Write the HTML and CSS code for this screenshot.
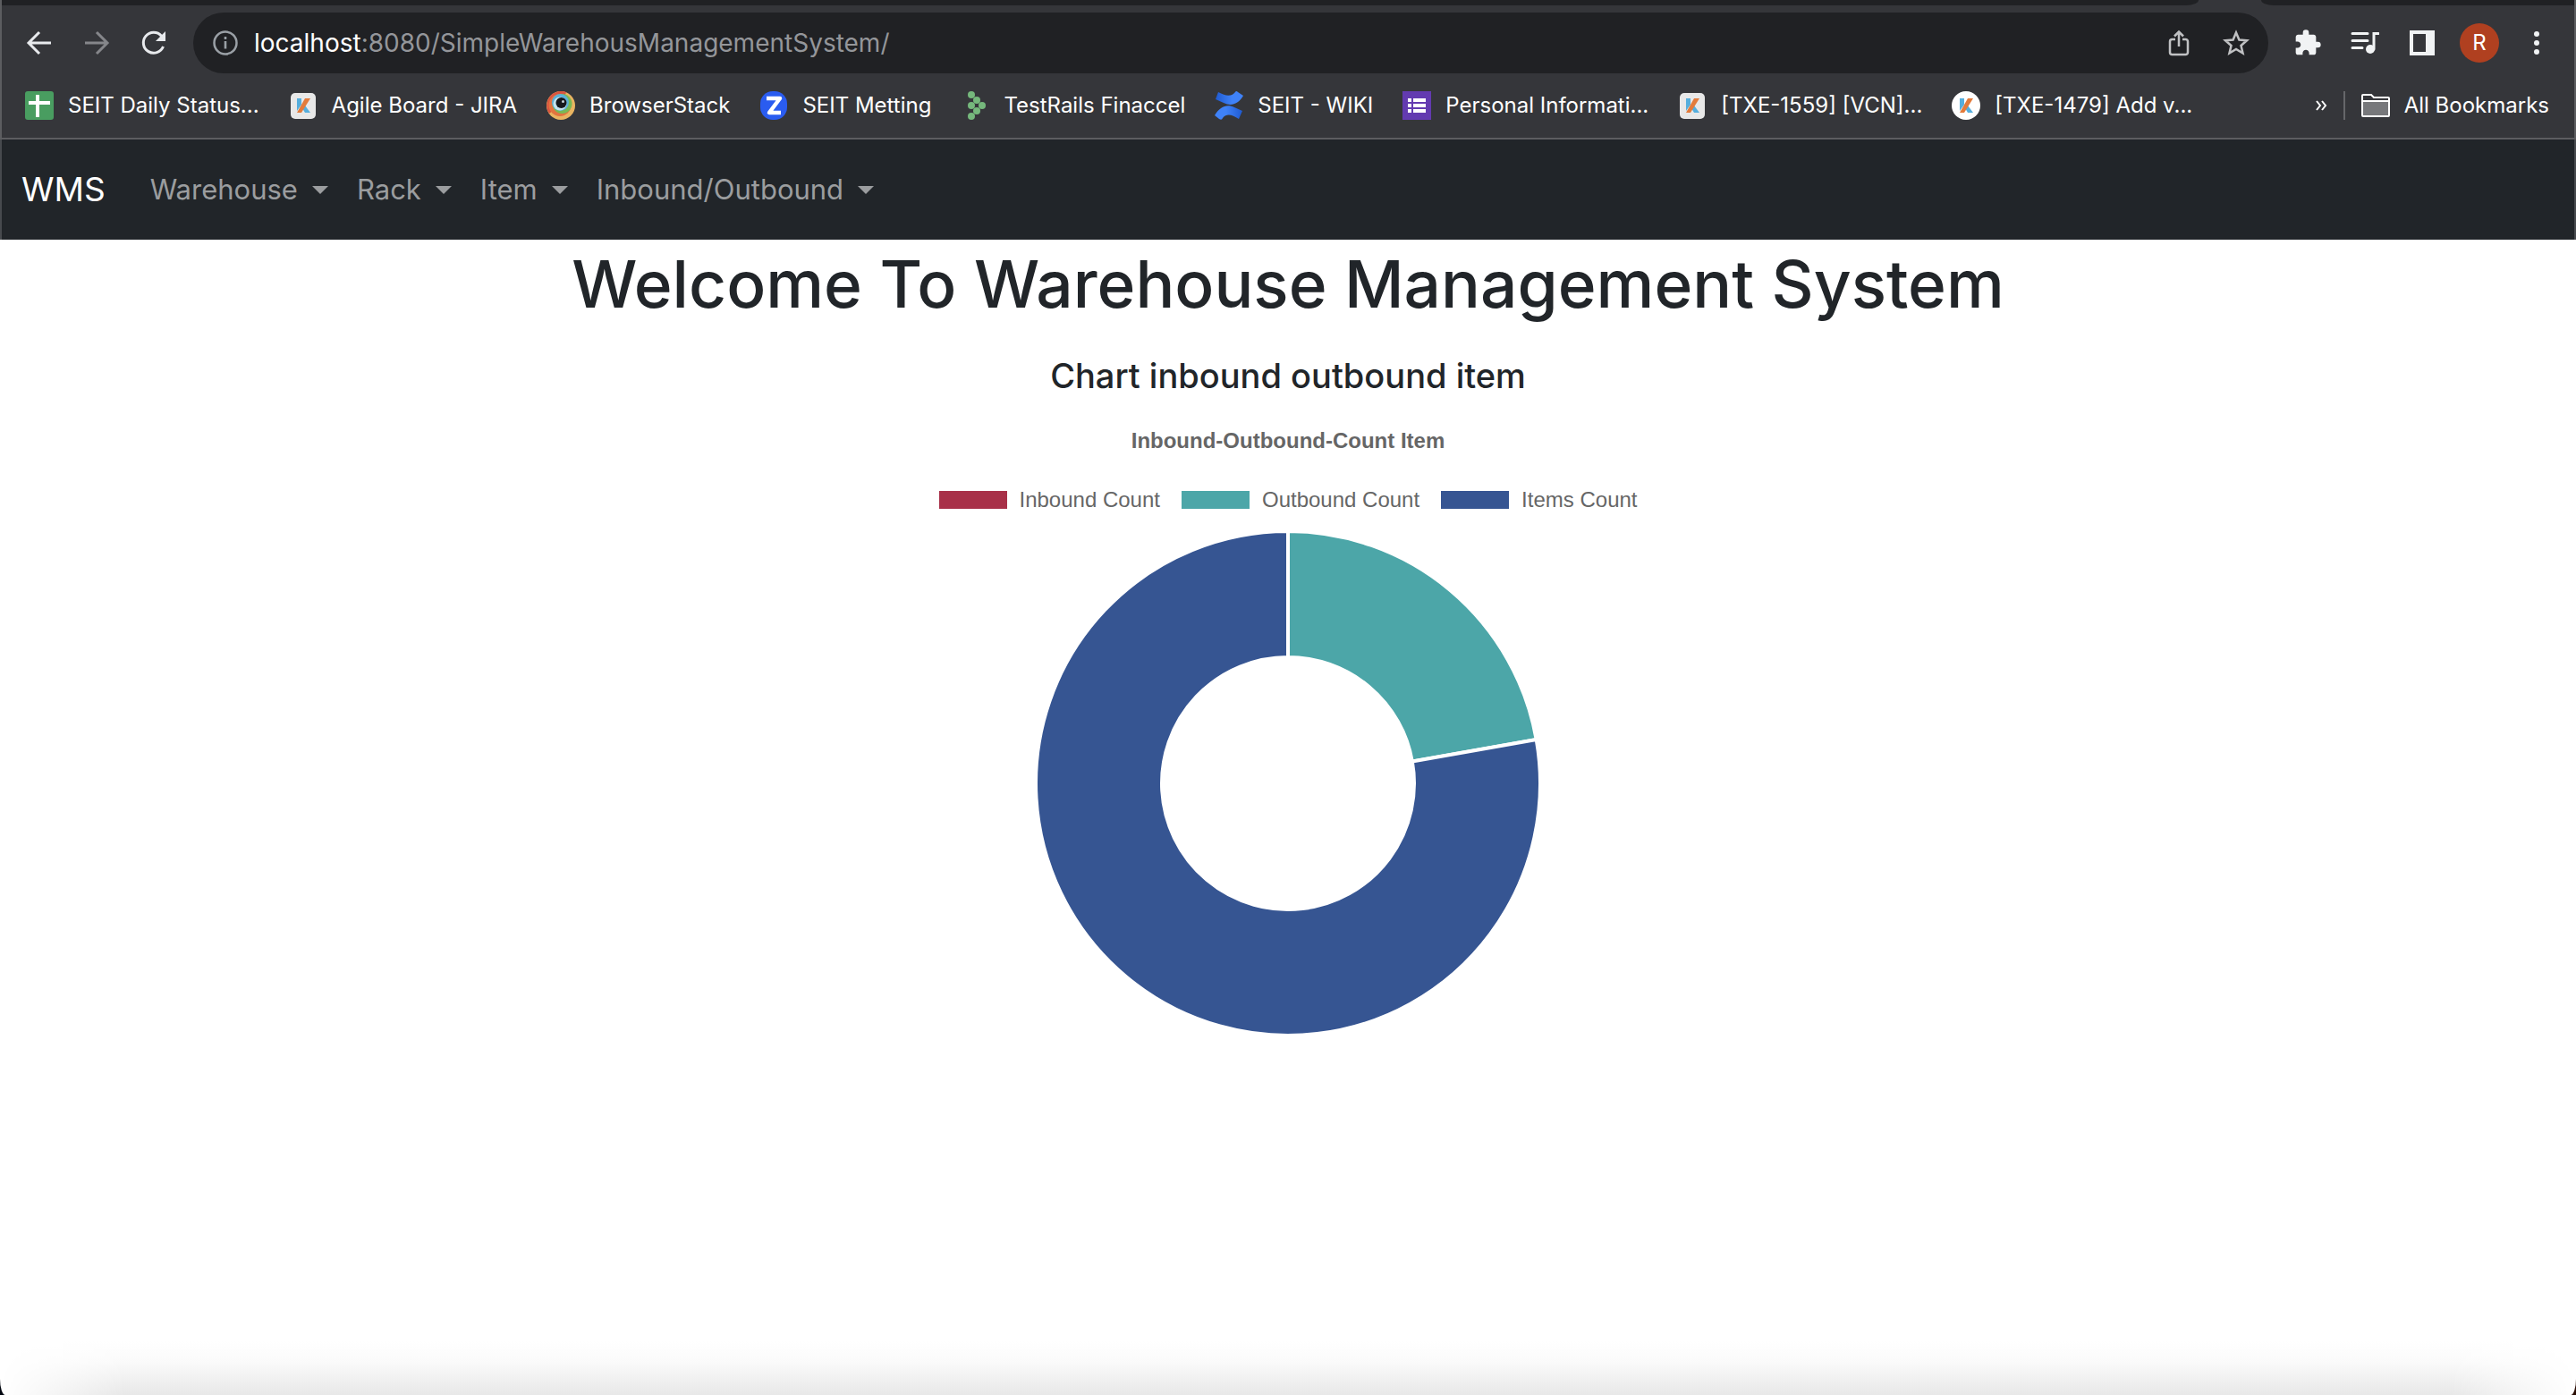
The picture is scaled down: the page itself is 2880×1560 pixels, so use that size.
FILE: index.html
```
<!DOCTYPE html>
<html lang="en">
<head>
<meta charset="utf-8">
<title>Warehouse Management System</title>
<link rel="stylesheet" href="styles.css">
</head>
<body>
<header class="chrome">
  <div class="tabstrip"><span class="tabs-left"></span><span class="tab-active"></span><span class="tabs-right"></span></div>
  <div class="toolbar">
    <button class="tool" aria-label="Back"><svg viewBox="0 0 32 32" class="icon"><path d="M29 16H5M16 4 4 16l12 12" fill="none" stroke="#e8eaed" stroke-width="3"/></svg></button>
    <button class="tool" aria-label="Forward"><svg viewBox="0 0 32 32" class="icon"><path d="M3 16h24M16 4l12 12-12 12" fill="none" stroke="#85868a" stroke-width="3"/></svg></button>
    <button class="tool" aria-label="Reload"><svg viewBox="0 0 32 32" class="icon"><path d="M26.500 20A11.500 11.500 0 1 1 24.500 8.200" fill="none" stroke="#e8eaed" stroke-width="3"/><path d="M29 3v11H18z" fill="#e8eaed"/></svg></button>
    <div class="omnibox">
      <button class="tool" aria-label="Site information"><svg viewBox="0 0 32 32" class="icon"><circle cx="16" cy="16" r="12.500" fill="none" stroke="#9aa0a6" stroke-width="2.500"/><path d="M16 14v8.500M16 9v3" stroke="#9aa0a6" stroke-width="2.600"/></svg></button>
      <div class="url"><span class="host">localhost</span>:8080/SimpleWarehousManagementSystem/</div>
      <button class="tool" aria-label="Share"><svg viewBox="0 0 32 32" class="icon"><g fill="none" stroke="#c0c1c3" stroke-width="2.500"><path d="M12 12H8.500a2.500 2.500 0 0 0-2.500 2.500v12a2.500 2.500 0 0 0 2.500 2.500h15a2.500 2.500 0 0 0 2.500-2.500v-12a2.500 2.500 0 0 0-2.500-2.500H20M16 20V4M11 8.500 16 3.500l5 5"/></g></svg></button>
      <button class="tool" aria-label="Bookmark this page"><svg viewBox="0 0 32 32" class="icon"><path d="M16 4.500l3.400 8 8.600.8-6.500 5.700 2 8.500L16 23l-7.500 4.500 2-8.500L4 13.300l8.600-.8z" fill="none" stroke="#c0c1c3" stroke-width="2.500"/></svg></button>
    </div>
    <button class="tool" aria-label="Extensions"><svg viewBox="0 0 24 24" class="icon"><path d="M20.500 11H19V7c0-1.100-.9-2-2-2h-4V3.500a2.500 2.500 0 0 0-5 0V5H4c-1.100 0-1.990.9-1.990 2v3.800H3.500c1.490 0 2.700 1.210 2.700 2.700s-1.210 2.700-2.700 2.700H2V20c0 1.100.9 2 2 2h3.800v-1.500c0-1.490 1.210-2.700 2.700-2.700s2.700 1.210 2.700 2.700V22H17c1.100 0 2-.9 2-2v-4h1.500a2.500 2.500 0 0 0 0-5z" fill="#f1f3f4"/></svg></button>
    <button class="tool" aria-label="Media controls"><svg viewBox="0 0 32 32" class="icon"><g fill="none" stroke="#f1f3f4" stroke-width="3" stroke-linecap="round"><path d="M2 5.500h17M2 13.500h17M2 21.500h11M26 23V5.500h5"/></g><circle cx="22" cy="23" r="5" fill="#f1f3f4"/></svg></button>
    <button class="tool" aria-label="Side panel"><svg viewBox="0 0 32 32" class="icon"><path d="M2 2h28v28H2zM6 6v20h14V6z" fill="#f1f3f4" fill-rule="evenodd"/></svg></button>
    <button class="tool" aria-label="Profile"><span class="avatar">R</span></button>
    <button class="tool" aria-label="Menu"><svg viewBox="0 0 32 32" class="icon"><g fill="#f1f3f4"><circle cx="16" cy="6" r="3"/><circle cx="16" cy="16" r="3"/><circle cx="16" cy="26" r="3"/></g></svg></button>
  </div>
  <nav class="bookmarks" aria-label="Bookmarks">
    <a class="bookmark" href="#"><svg viewBox="0 0 32 32" class="icon"><rect width="32" height="32" rx="3" fill="#499d60"/><path d="M4 13h24M14 4v25" stroke="#fff" stroke-width="4"/></svg>SEIT Daily Status...</a>
    <a class="bookmark" href="#"><svg viewBox="0 0 32 32" class="icon"><rect x="2" y="2" width="28" height="29" rx="5" fill="#e8e8e8"/><path d="M9 8h5v7l-5 7zM15 19l3-3 6 8h-6z" fill="#55aedd"/><path d="M18 8h6L14 24H9z" fill="#e37b3b"/></svg>Agile Board - JIRA</a>
    <a class="bookmark" href="#"><svg viewBox="0 0 32 32" class="icon"><circle cx="16" cy="16" r="16" fill="#e9b461"/><path d="M3 25A16 16 0 0 1 22 1l-4 12z" fill="#d9553f"/><circle cx="15" cy="15.500" r="12.500" fill="#e2733f"/><circle cx="17.500" cy="14" r="11" fill="#79b955"/><circle cx="15.500" cy="12.500" r="9.500" fill="#5bb0d8"/><circle cx="15" cy="14" r="7.500" fill="#c4e4ee"/><circle cx="16.500" cy="13" r="6" fill="#16181c"/><circle cx="18.500" cy="11.500" r="1.500" fill="#c8d4da"/></svg>BrowserStack</a>
    <a class="bookmark" href="#"><svg viewBox="0 0 32 32" class="icon"><rect x="1" width="30" height="32" rx="14" fill="#2a5cf0"/><path d="M8 8h15L11 24h13" fill="none" stroke="#fff" stroke-width="4.500" stroke-linejoin="round"/></svg>SEIT Metting</a>
    <a class="bookmark" href="#"><svg viewBox="0 0 32 32" class="icon"><g fill="#75b87c"><circle cx="12" cy="4" r="4"/><circle cx="18" cy="10" r="4"/><circle cx="12" cy="16" r="4"/><circle cx="24" cy="16" r="4"/><circle cx="18" cy="22" r="4"/><circle cx="12" cy="28" r="4"/></g></svg>TestRails Finaccel</a>
    <a class="bookmark" href="#"><svg viewBox="0 0 32 32" class="icon"><defs><linearGradient id="wiki-top"><stop stop-color="#1f5ad0"/><stop offset=".6" stop-color="#3f82f8"/></linearGradient><linearGradient id="wiki-bottom"><stop offset=".4" stop-color="#3f82f8"/><stop offset="1" stop-color="#1f5ad0"/></linearGradient></defs><path d="M4 1C12 5 18 7 23 1Q24-1 26 1L32 5C26 15 18 17 10 13L1 9z" fill="url(#wiki-top)"/><path d="M27 31C20 27 14 24 9 30Q8 33 5 31L0 27C6 17 14 14 22 18L31 22z" fill="url(#wiki-bottom)"/></svg>SEIT - WIKI</a>
    <a class="bookmark" href="#"><svg viewBox="0 0 32 32" class="icon"><rect width="32" height="32" fill="#633bb0"/><path d="M6 10h4M6 16h4M6 22h4M12 10h14M12 16h14M12 22h14" stroke="#fff" stroke-width="4"/></svg>Personal Informati...</a>
    <a class="bookmark" href="#"><svg viewBox="0 0 32 32" class="icon"><rect x="2" y="2" width="28" height="29" rx="5" fill="#e8e8e8"/><path d="M9 8h5v7l-5 7zM15 19l3-3 6 8h-6z" fill="#55aedd"/><path d="M18 8h6L14 24H9z" fill="#e37b3b"/></svg>[TXE-1559] [VCN]...</a>
    <a class="bookmark" href="#"><svg viewBox="0 0 32 32" class="icon"><circle cx="16" cy="16" r="16" fill="#fff"/><path d="M9 8h5v7l-5 7zM15 19l3-3 6 8h-6z" fill="#55aedd"/><path d="M18 8h6L14 24H9z" fill="#e37b3b"/></svg>[TXE-1479] Add v...</a>
    <button class="more" aria-label="More bookmarks"><svg viewBox="0 0 16 16" class="chevrons"><path d="M3 3l4 5-4 5M9 3l4 5-4 5" fill="none" stroke="#fff" stroke-width="2"/></svg></button>
    <a class="bookmark all" href="#"><svg viewBox="0 0 32 32" class="icon"><path d="M1 27V5q0-1 1-1h9l3 3h16q1 0 1 1v19q0 1-1 1H2q-1 0-1-1z" fill="#35363a" stroke="#fff" stroke-width="2"/><path d="M2 11h28v16H2z" fill="#77787b"/><path d="M1 11h30" stroke="#fff" stroke-width="2"/></svg>All Bookmarks</a>
  </nav>
</header>
<nav class="navbar" aria-label="Main">
  <a class="brand" href="#">WMS</a>
  <a class="nav-link" href="#">Warehouse</a>
  <a class="nav-link" href="#">Rack</a>
  <a class="nav-link" href="#">Item</a>
  <a class="nav-link" href="#">Inbound/Outbound</a>
</nav>
<main class="page">
  <h1 class="title">Welcome To Warehouse Management System</h1>
  <h2 class="subtitle">Chart inbound outbound item</h2>
  <figure class="chart">
    <figcaption class="chart-title">Inbound-Outbound-Count Item</figcaption>
    <ul class="legend">
      <li class="key"><span class="swatch inbound"></span>Inbound Count</li>
      <li class="key"><span class="swatch outbound"></span>Outbound Count</li>
      <li class="key"><span class="swatch items"></span>Items Count</li>
    </ul>
    <svg class="donut" viewBox="-282 -282 564 564" role="img" aria-label="Outbound and items share">
      <g stroke="#fff" stroke-width="4">
        <path d="M0-282A282 282 0 0 1 277.716-48.969L138.858-24.484A141 141 0 0 0 0-141z" fill="#4ca6a8"/>
        <path d="M277.716-48.969A282 282 0 1 1 0-282V-141A141 141 0 1 0 138.858-24.484z" fill="#365592"/>
      </g>
    </svg>
  </figure>
</main>
<div class="shade"></div>
</body>
</html>
```
FILE: styles.css
```
* { box-sizing: border-box; }
html { background: linear-gradient(90deg, #02060f 50%, #2a0d04 50%); }
body {
  margin: 0;
  min-height: 100vh;
  display: flex;
  flex-direction: column;
  background: #fff;
  border-radius: 0 0 6px 6px / 0 0 18px 18px;
  overflow: hidden;
  font-family: Inter, "Liberation Sans", sans-serif;
  color: #212529;
}
a { color: inherit; text-decoration: none; }
button { border: 0; padding: 0; background: none; color: inherit; font: inherit; }
.icon { width: 32px; height: 32px; flex: none; display: block; }

.chrome { background: #35363a; border: 0 solid #5c5d60; border-width: 0 2px 2px; color: #fff; }
.tabstrip { display: flex; height: 6px; }
.tabs-left, .tabs-right { background: #202124; }
.tabs-left { flex: 1; border-radius: 0 0 14px 0 / 0 0 6px 0; }
.tab-active { width: 70px; }
.tabs-right { width: 350px; border-radius: 0 0 0 14px / 0 0 0 6px; }
.toolbar { display: flex; align-items: center; padding: 8px 10px 0; }
.tool { width: 64px; height: 64px; flex: none; display: grid; place-items: center; }
.omnibox {
  flex: 1;
  display: flex;
  align-items: center;
  height: 68px;
  margin: 0 12px;
  padding: 0 4px;
  border-radius: 34px;
  background: #202124;
}
.url { flex: 1; font-size: 28px; line-height: 40px; color: #94969a; }
.host { color: #fff; }
.avatar { width: 44px; height: 44px; border-radius: 50%; background: #b04020; color: #fff; font-size: 24px; line-height: 44px; text-align: center; }

.bookmarks { display: flex; align-items: center; gap: 33px; height: 72px; padding: 0 28px 0 26px; font-size: 24px; line-height: 32px; white-space: nowrap; }
.bookmark { display: flex; align-items: center; gap: 16px; }
.more { margin-left: auto; margin-right: -16px; }
.chevrons { width: 16px; height: 16px; display: block; }
.all { border-left: 2px solid #66676a; padding-left: 18px; }

.navbar { display: flex; align-items: center; gap: 32px; height: 112px; padding: 0 22px; background: #212529; border: 0 solid #474a4e; border-width: 0 2px; font-size: 31px; line-height: 48px; color: #9b9d9f; }
.brand { font-size: 37px; color: #fff; margin-right: 18px; }
.nav-link { display: flex; align-items: center; gap: 16px; }
.nav-link::after { content: ""; border: 9px solid transparent; border-top-color: currentColor; border-bottom: 0; }

.page { flex: 1; padding-top: 2px; text-align: center; }
.title { margin: 0; font-size: 73px; line-height: 96px; font-weight: 500; }
.subtitle { margin: 30px 0 32px; font-size: 38px; line-height: 48px; font-weight: 500; }
.chart { margin: 0; font-family: "Liberation Sans", Arial, sans-serif; font-size: 24px; line-height: 34px; color: #666; }
.chart-title { font-weight: 700; }
.legend { list-style: none; margin: 32px 0 18px; padding: 0; display: flex; justify-content: center; gap: 24px; }
.key { display: flex; align-items: center; gap: 14px; }
.swatch { width: 76px; height: 20px; }
.inbound { background: #a83048; }
.outbound { background: #4ca6a8; }
.items { background: #365592; }
.donut { width: 564px; height: 564px; display: block; margin: 0 auto; }

.shade {
  height: 60px;
  background: linear-gradient(#fff, #fafafa 40%, #e8e8e8);
  mask-image: linear-gradient(90deg, transparent, #000 140px, #000 calc(100% - 140px), transparent);
}
```
